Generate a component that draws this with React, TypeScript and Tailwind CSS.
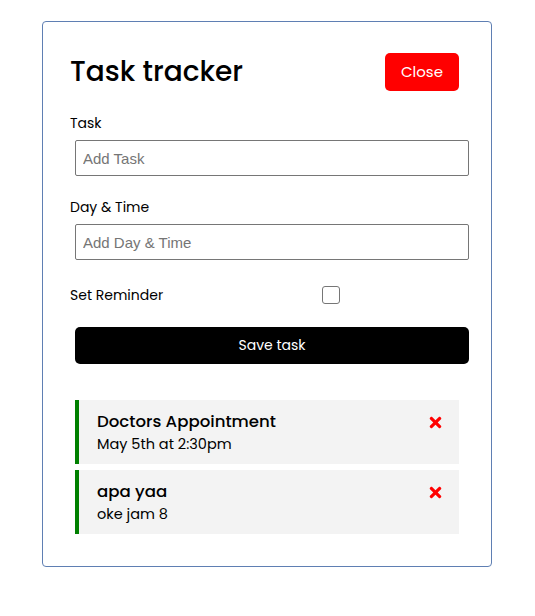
import React, { useState } from "react";
import { FaTimes } from "react-icons/fa";

type Task = {
  id: number;
  text: string;
  day: string;
  reminder: boolean;
};

const initialTasks: Task[] = [
  { id: 1, text: "Doctors Appointment", day: "May 5th at 2:30pm", reminder: true },
  { id: 2, text: "apa yaa", day: "oke jam 8", reminder: true },
];

const App: React.FC = () => {
  const [tasks, setTasks] = useState<Task[]>(initialTasks);
  const [text, setText] = useState("");
  const [day, setDay] = useState("");
  const [reminder, setReminder] = useState(false);

  const onSubmit = (e: React.FormEvent) => {
    e.preventDefault();
    if (!text) return;
    setTasks([...tasks, { id: Date.now(), text, day, reminder }]);
    setText("");
    setDay("");
    setReminder(false);
  };

  return (
    <div className="min-h-screen bg-white pt-[21px] font-['Poppins','Inter',sans-serif] text-black">
      <div className="ml-[42px] w-[450px] rounded-[4px] border border-[#5f7fb3] px-[27px] pt-[26px] pb-[27px]">
        {/* header */}
        <header className="mb-[20px] flex items-center justify-between">
          <h1 className="text-[28px] font-medium leading-none">Task tracker</h1>
          <button className="m-[5px] h-[38px] w-[74px] rounded-[5px] bg-[#ff0000] text-[15px] text-white">
            Close
          </button>
        </header>

        <form onSubmit={onSubmit} className="mb-[36px]">
          <div className="mb-[24px]">
            <label className="block text-[14px] leading-[15px]">Task</label>
            <input
              type="text"
              placeholder="Add Task"
              value={text}
              onChange={(e) => setText(e.target.value)}
              className="mx-[5px] mt-[9px] block h-[36px] w-full border border-[#767676] rounded-[2px] px-[7px] font-['Liberation_Sans',Arial,sans-serif] text-[15px] placeholder:text-[#757575]"
            />
          </div>
          <div className="mb-[25px]">
            <label className="block text-[14px] leading-[15px]">Day &amp; Time</label>
            <input
              type="text"
              placeholder="Add Day & Time"
              value={day}
              onChange={(e) => setDay(e.target.value)}
              className="mx-[5px] mt-[9px] block h-[36px] w-full border border-[#767676] rounded-[2px] px-[7px] font-['Liberation_Sans',Arial,sans-serif] text-[15px] placeholder:text-[#757575]"
            />
          </div>
          <div className="flex h-[20px] items-center">
            <label className="flex-1 text-[14px]">Set Reminder</label>
            <div className="flex flex-[2] justify-center pr-[2px]">
              <input
                type="checkbox"
                checked={reminder}
                onChange={(e) => setReminder(e.target.checked)}
                className="block h-[18px] w-[18px] appearance-none rounded-[3px] border border-[#767676] bg-white checked:bg-blue-600"
              />
            </div>
          </div>
          <button
            type="submit"
            className="mx-[5px] mt-[22px] block h-[37px] w-full rounded-[5px] bg-black text-[14px] text-white"
          >
            Save task
          </button>
        </form>

        {tasks.map((task) => (
          <div
            key={task.id}
            className={`mx-[5px] mt-[6px] mb-[5px] h-[64px] bg-[#f3f3f3] pl-[18px] pr-[15px] pt-[11px] first:mt-0 ${
              task.reminder ? "border-l-[4px] border-[#008000]" : ""
            }`}
          >
            <div className="flex items-center justify-between">
              <h3 className="text-[16.6px] font-medium leading-[22px]">{task.text}</h3>
              <FaTimes
                className="cursor-pointer text-[17px] text-[#ff0000]"
                onClick={() => setTasks(tasks.filter((t) => t.id !== task.id))}
              />
            </div>
            <p className="text-[14.5px] leading-[22px]">{task.day}</p>
          </div>
        ))}
      </div>
    </div>
  );
};

export default App;
